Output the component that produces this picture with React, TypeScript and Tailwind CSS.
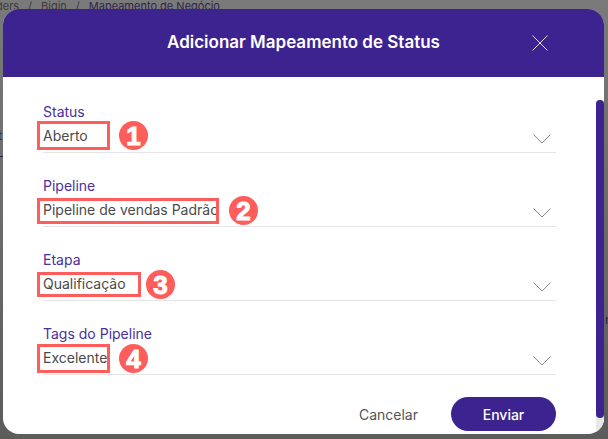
const fields = [
  { label: "Status", value: "Aberto", num: 1, box: "w-[73px] top-[-6px] h-[29px]", badge: "left-[76px] top-[-6px]" },
  { label: "Pipeline", value: "Pipeline de vendas Padrão", num: 2, box: "w-[182px] top-[-3px] h-[26px]", badge: "left-[186px] top-[-5px]" },
  { label: "Etapa", value: "Qualificação", num: 3, box: "w-[104px] top-[-3px] h-[25px]", badge: "left-[103px] top-[-5px]" },
  { label: "Tags do Pipeline", value: "Excelente", num: 4, box: "w-[73px] top-[-5px] h-[29px]", badge: "left-[76px] top-[-5px]" },
];

function Chevron() {
  return (
    <svg width="18" height="10" viewBox="0 0 18 10" fill="none" className="mt-[7px] mr-[5px] text-[#8a8a8a]">
      <path d="M0.5 0.5 L9 9 L17.5 0.5" stroke="currentColor" strokeWidth="1" />
    </svg>
  );
}

function Field({ field }: { field: (typeof fields)[number] }) {
  return (
    <div className="h-[74px] flex flex-col justify-end border-b border-[#e5e5e5]">
      <label className="text-[14px] leading-[18px] text-[#4a2f9f]">{field.label}</label>
      <div className="h-[31px] flex items-start justify-between pt-[6px]">
        <div className="relative text-[14px] leading-[17px] text-[#4a4a4a]">
          {field.value}
          <span className={`absolute left-[-6px] border-[3px] border-[#ff5c5c] ${field.box}`} />
          <span
            className={`absolute w-[29px] h-[29px] rounded-full bg-[#ff5c5c] text-white flex items-center justify-center text-[26px] leading-none font-black font-['Liberation_Sans',sans-serif] [-webkit-text-stroke:1px_white] ${field.badge}`}
          >
            {field.num}
          </span>
        </div>
        <Chevron />
      </div>
    </div>
  );
}

export default function App() {
  return (
    <div className="relative w-[608px] h-[439px] overflow-hidden bg-gradient-to-b from-[#7a7a7a] to-[#5c5c5c] font-['Inter',sans-serif]">
      <div className="flex gap-[9px] ml-[-4px] pt-[1px] text-[11px] leading-[10px] text-[#3a3a3a]">
        <span>ders</span>
        <span>/</span>
        <span>Bigin</span>
        <span>/</span>
        <span className="text-[#2c2550]">Mapeamento de Negócio</span>
      </div>
      <span className="absolute left-[-2px] top-[127px] text-[12px] text-[#2c2550]">t</span>
      <div className="absolute left-0 top-[156px] w-[3px] h-[1px] bg-[#2c2550]" />
      <span className="absolute left-[605px] top-[311px] text-[12px] text-[#2c2550]">n</span>

      <div className="absolute left-[3px] top-[9px] w-[601px] h-[425px] rounded-[16px] overflow-hidden bg-white flex flex-col">
        <div className="h-[68px] shrink-0 bg-[#3d238f] flex items-center justify-center relative">
          <h2 className="text-[17px] font-semibold text-white font-['Inter',sans-serif]">Adicionar Mapeamento de Status</h2>
          <svg width="16" height="16" viewBox="0 0 16 16" fill="none" className="absolute left-[529px] top-[26px] text-[#dddddd]">
            <path d="M0.5 0.5 L15.5 15.5 M15.5 0.5 L0.5 15.5" stroke="currentColor" strokeWidth="1" />
          </svg>
        </div>

        <div className="relative flex-1">
          <div className="ml-[40px] w-[513px] mt-[2px]">
            {fields.map((f) => (
              <Field key={f.label} field={f} />
            ))}
          </div>
          <div className="flex justify-end items-center gap-[33px] w-[553px] mt-[22px]">
            <button className="text-[14px] text-[#555555]">Cancelar</button>
            <button className="w-[105px] h-[34px] rounded-full bg-[#3d238f] text-white text-[14px] font-medium">Enviar</button>
          </div>

          <div className="absolute right-0 top-0 bottom-0 w-[8px] pt-[23px] bg-white">
            <div className="h-full bg-[#e8e8e8]">
              <div className="h-[318px] rounded-full bg-[#3d238f]" />
            </div>
          </div>
        </div>
      </div>
    </div>
  );
}
